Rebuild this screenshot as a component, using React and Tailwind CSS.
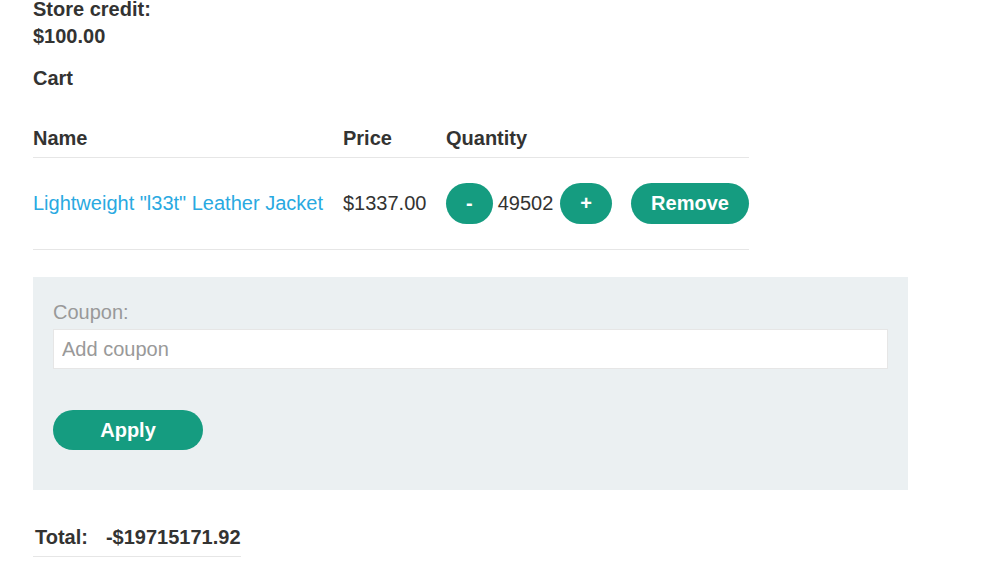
import React from 'react';

const green = 'bg-[#159c80]';

export default function App() {
  return (
    <div className="min-h-screen bg-white pl-[33px] text-[20px] leading-[27px] text-[#333332] font-['Liberation_Sans',Arial,sans-serif]">
      <p className="-mt-[4px] font-bold">Store credit:</p>
      <p className="font-bold">$100.00</p>
      <h3 className="mt-[15px] font-bold">Cart</h3>

      <table className="mt-[33px] w-[716px] table-fixed border-collapse">
        <thead>
          <tr className="border-b border-[#e6e6e6] text-left">
            <th className="w-[310px] pb-[5px] font-bold">Name</th>
            <th className="w-[103px] pb-[5px] font-bold">Price</th>
            <th className="w-[185px] pb-[5px] font-bold">Quantity</th>
            <th className="w-[118px] pb-[5px]"></th>
          </tr>
        </thead>
        <tbody>
          <tr className="h-[92px] border-b border-[#e6e6e6]">
            <td className="align-middle">
              <a href="#" className="whitespace-nowrap text-[#29a9e1]">Lightweight "l33t" Leather Jacket</a>
            </td>
            <td className="align-middle">$1337.00</td>
            <td className="align-middle">
              <div className="flex items-center">
                <button className={`${green} h-[41px] rounded-full px-5 font-bold text-white`}>-</button>
                <span className="ml-[5px] mr-[7px]">49502</span>
                <button className={`${green} h-[41px] rounded-full px-5 font-bold text-white`}>+</button>
              </div>
            </td>
            <td className="align-middle">
              <button className={`${green} h-[41px] w-[118px] rounded-full font-bold text-white`}>Remove</button>
            </td>
          </tr>
        </tbody>
      </table>

      <div className="mt-[27px] w-[875px] bg-[#ebf0f2] px-5 pt-[22px] pb-[40px]">
        <label className="block text-[#999999]">Coupon:</label>
        <input
          type="text"
          placeholder="Add coupon"
          className="mt-[3px] block h-[40px] w-full border border-[#e6e6e6] bg-white px-[8px] text-[20px] placeholder-[#999999] outline-none"
        />
        <button className={`${green} mt-[41px] block h-[40px] w-[150px] rounded-full font-bold text-white`}>Apply</button>
      </div>

      <table className="mt-[34px] border-collapse">
        <tbody>
          <tr className="border-b border-[#e6e6e6]">
            <th className="pb-[5px] pl-[2px] pr-[18px] text-left font-bold">Total:</th>
            <th className="pb-[5px] text-left font-bold">-$19715171.92</th>
          </tr>
        </tbody>
      </table>
    </div>
  );
}
